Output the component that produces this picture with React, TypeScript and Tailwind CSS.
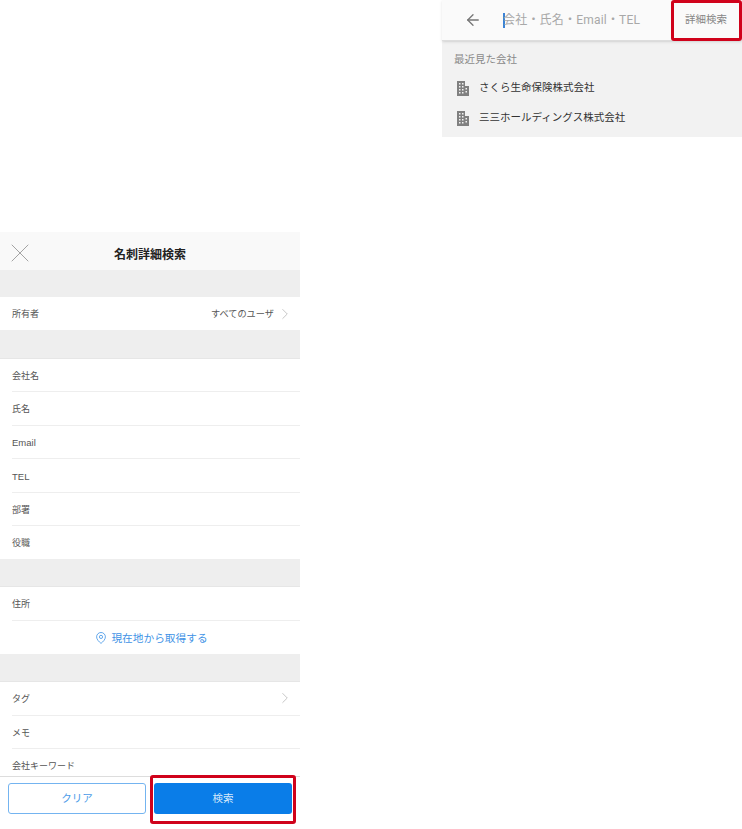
import { ArrowLeft, ChevronRight, X } from "lucide-react";

const jpFont = "font-['Roboto','Noto_Sans_CJK_JP',sans-serif]";
const formFont = "font-['Liberation_Sans','Noto_Sans_CJK_JP',sans-serif]";

const BuildingIcon = () => (
  <svg width="12" height="15" viewBox="0 0 12 15" className="shrink-0" fill="#808080">
    <path d="M0 0h8v5h4v10H0z" />
    <g fill="#f2f2f2">
      <rect x="2" y="2" width="1.5" height="1.5" />
      <rect x="5" y="2" width="1.5" height="1.5" />
      <rect x="2" y="5" width="1.5" height="1.5" />
      <rect x="5" y="5" width="1.5" height="1.5" />
      <rect x="8.5" y="7" width="1.5" height="1.5" />
      <rect x="2" y="8" width="1.5" height="1.5" />
      <rect x="5" y="8" width="1.5" height="1.5" />
      <rect x="8.5" y="10" width="1.5" height="1.5" />
      <rect x="2" y="11" width="1.5" height="1.5" />
      <rect x="5" y="11" width="1.5" height="1.5" />
    </g>
  </svg>
);

const PinIcon = () => (
  <svg width="10" height="12" viewBox="0 0 10 12" fill="none" stroke="#3f93e6" strokeWidth="0.8" className="shrink-0">
    <path d="M5 11.4C3 9.8.6 7.4.6 4.9A4.4 4.4 0 0 1 9.4 4.9C9.4 7.4 7 9.8 5 11.4Z" />
    <circle cx="5" cy="4.9" r="1.6" />
  </svg>
);

const Chevron = ({ className }: { className: string }) => (
  <ChevronRight size={18} strokeWidth={0.9} className={`-mx-[6px] shrink-0 text-[#aaaaaa] ${className}`} />
);

const RedBox = ({ className }: { className: string }) => (
  <div className={`absolute rounded-[3px] border-[3px] border-[#d0021b] ${className}`} />
);

const Gap = ({ className = "h-[28px]" }: { className?: string }) => (
  <div className={`shrink-0 border-b border-[#e6e6e6] bg-[#eeeeee] ${className}`} />
);

const Row = ({
  label,
  last,
  chevron,
  latin,
}: {
  label: string;
  last?: boolean;
  chevron?: boolean;
  latin?: boolean;
}) => (
  <div className="shrink-0 pl-3">
    <div
      className={`flex items-center justify-between pr-[12px] pt-[3px] text-[#555555] ${
        latin ? "text-[9.5px]" : "text-[9px]"
      } ${last ? "h-[33px]" : "h-[33.5px] border-b border-[#eeeeee]"}`}
    >
      <span>{label}</span>
      {chevron && <Chevron className="-mt-[3px]" />}
    </div>
  </div>
);

const RecentSearch = () => (
  <div className="relative h-[137px] w-[300px] bg-[#f2f2f2]">
    <div className="flex h-[41px] items-center border-b border-[#dddddd] bg-[#fafafa] shadow-sm">
      <ArrowLeft size={18} strokeWidth={1.75} className="ml-[22px] text-[#757575]" />
      <div className="ml-[21px] h-[15px] w-[2px] bg-[#3b82d6]" />
      <span className="-ml-[2px] text-[12px] tracking-[0.2px] text-[#a8a8a8]">会社・氏名・Email・TEL</span>
      <span className="ml-auto mr-[15px] text-[10.5px] text-[#858585]">詳細検索</span>
    </div>
    <div className="px-3 pt-[12px] text-[10.5px] leading-[14px] text-[#8a8a8a]">最近見た会社</div>
    <div className="mt-[6px] flex h-[30px] items-center gap-[10px] pl-[15px] text-[10.5px] text-[#333333]">
      <BuildingIcon />
      さくら生命保険株式会社
    </div>
    <div className="flex h-[30px] items-center gap-[10px] pl-[15px] text-[10.5px] text-[#333333]">
      <BuildingIcon />
      三三ホールディングス株式会社
    </div>
    <RedBox className="right-0 top-0 h-[41px] w-[71px]" />
  </div>
);

const DetailSearch = () => (
  <div className={`relative mt-[232px] flex h-[597px] w-[300px] flex-col overflow-hidden bg-white ${formFont}`}>
    <div className="relative flex h-[38px] shrink-0 items-center justify-center bg-[#f9f9f9] pt-[8px]">
      <X size={32} strokeWidth={0.5} className="absolute left-[4px] top-[5px] text-[#777777]" />
      <span className="text-[12px] font-bold text-[#222222]">名刺詳細検索</span>
    </div>
    <div className="h-[27px] shrink-0 bg-[#eeeeee]" />
    <div className="flex h-[33px] shrink-0 items-center justify-between pl-3 pr-[12px] pt-[2px] text-[9px] text-[#555555]">
      <span>所有者</span>
      <span className="flex items-center gap-[8px]">
        <span className="text-[9.2px]">すべてのユーザ</span>
        <Chevron className="-mt-[2px]" />
      </span>
    </div>
    <Gap className="h-[28.5px]" />
    <Row label="会社名" />
    <Row label="氏名" />
    <Row label="Email" latin />
    <Row label="TEL" latin />
    <Row label="部署" />
    <Row label="役職" last />
    <Gap />
    <Row label="住所" />
    <div className="flex h-[33.5px] shrink-0 items-center justify-center gap-[5px] pl-[4px] pt-[1px] text-[10.7px] text-[#3f93e6]">
      <PinIcon />
      現在地から取得する
    </div>
    <Gap />
    <Row label="タグ" chevron />
    <Row label="メモ" />
    <Row label="会社キーワード" last />
    <div className="absolute inset-x-0 bottom-0 flex h-[53px] gap-2 border-t border-[#dddddd] bg-white px-2 pt-[6px]">
      <button className="h-[31px] w-[138px] rounded-[3px] border border-[#74b4f0] text-[10.5px] text-[#4b9be8]">
        クリア
      </button>
      <button className="h-[31px] w-[138px] rounded-[3px] bg-[#0a7de8] text-[10.5px] text-[#d6e9fb]">
        検索
      </button>
    </div>
    <RedBox className="bottom-[5px] left-[150px] h-[49px] w-[146px]" />
  </div>
);

export default function App() {
  return (
    <div className={`flex h-[829px] w-[742px] items-start justify-between bg-white ${jpFont}`}>
      <DetailSearch />
      <RecentSearch />
    </div>
  );
}
